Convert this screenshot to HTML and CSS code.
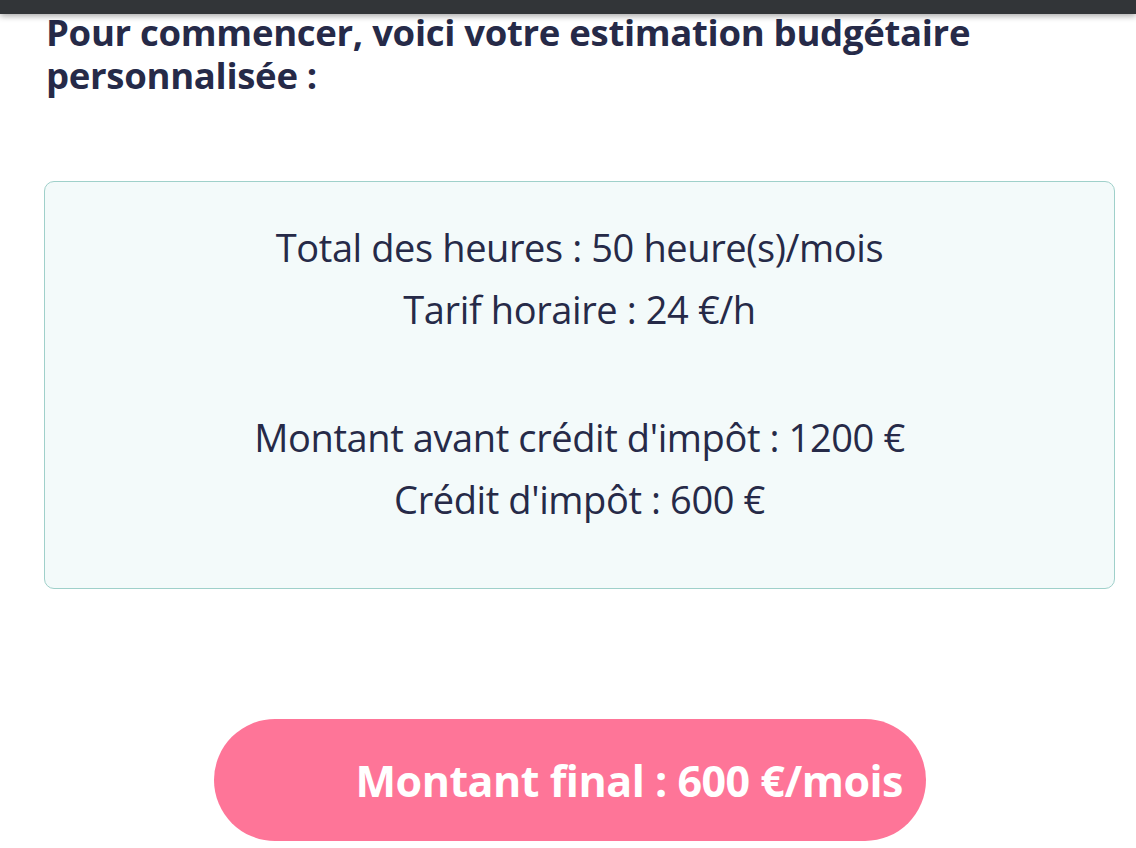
FILE: index.html
```html
<!DOCTYPE html>
<html lang="fr">
<head>
<meta charset="utf-8">
<title>Estimation budgétaire</title>
<link rel="stylesheet" href="styles.css">
</head>
<body>
<div class="topbar"></div>
<main class="content">
  <h1 class="title">Pour commencer, voici votre estimation budgétaire personnalisée :</h1>
  <section class="card">
    <p class="line">Total des heures : 50 heure(s)/mois</p>
    <p class="line">Tarif horaire : 24 €/h</p>
    <p class="line spaced">Montant avant crédit d'impôt : 1200 €</p>
    <p class="line">Crédit d'impôt : 600 €</p>
  </section>
  <div class="cta-row">
    <div class="cta">Montant final : 600 €/mois</div>
  </div>
</main>
</body>
</html>
```

FILE: styles.css
```css
html, body {
  margin: 0;
  padding: 0;
  background: #ffffff;
}
body {
  font-family: "Open Sans", "DejaVu Sans", sans-serif;
  color: #262a48;
  width: 1136px;
  height: 848px;
  overflow: hidden;
  position: relative;
}
.topbar {
  height: 14px;
  background: #323538;
  box-shadow: 0 2px 6px rgba(0, 0, 0, 0.35);
  position: relative;
  z-index: 2;
}
.content {
  padding: 0 21px 0 44px;
}
.title {
  margin: -3px 0 0 0;
  padding-left: 2px;
  font-size: 36.5px;
  line-height: 43px;
  font-weight: 700;
  letter-spacing: -0.3px;
  color: #262a48;
}
.card {
  margin-top: 84px;
  height: 408px;
  box-sizing: border-box;
  border: 1px solid #9fd0ca;
  border-radius: 10px;
  background: #f3fafa;
  padding-top: 34px;
  text-align: center;
}
.line {
  margin: 0;
  font-size: 38px;
  font-weight: 500;
  line-height: 62px;
  letter-spacing: -0.4px;
}
.spaced {
  margin-top: 66px;
}
.cta-row {
  display: flex;
  margin-top: 130px;
  padding-left: 170px;
}
.cta {
  width: 712px;
  height: 122px;
  border-radius: 61px;
  background: #fe7598;
  color: #ffffff;
  font-size: 43px;
  font-weight: 700;
  display: flex;
  align-items: center;
  justify-content: flex-end;
  padding-right: 23px;
  box-sizing: border-box;
  letter-spacing: -0.5px;
}
```
